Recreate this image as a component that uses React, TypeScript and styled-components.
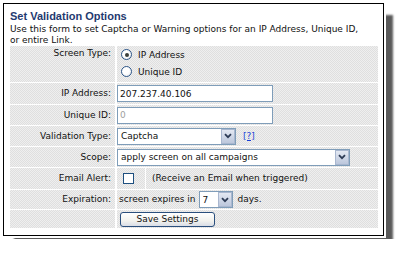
import React from "react";
import styled, { createGlobalStyle, css } from "styled-components";

const GlobalStyle = createGlobalStyle`
  html, body { margin: 0; padding: 0; background: #fff; }
  body { font-family: "DejaVu Sans", Verdana, sans-serif; }
`;

const dither = css`
  background-color: #e7e7e7;
  background-image: conic-gradient(#dfdfdf 25%, #efefef 0 50%, #dfdfdf 0 75%, #efefef 0);
  background-size: 2px 2px;
`;

const Page = styled.div`
  padding: 3px;
`;

const Card = styled.section`
  box-sizing: border-box;
  width: 381px;
  border: 1px solid #000;
  background: #fff;
  box-shadow: 0 0 0 2px #fff, 10px 11px 2px -1px #5a5a5a;
  padding: 6px 5px 7px 6px;
`;

const Title = styled.h2`
  margin: 0;
  font-family: "Liberation Sans", Arial, sans-serif;
  font-weight: bold;
  font-size: 11px;
  line-height: 13px;
  color: #1f3a70;
`;

const Desc = styled.p`
  margin: 1px 0 0;
  font-size: 9px;
  line-height: 11px;
  color: #111;
  white-space: nowrap;
`;

const Form = styled.form`
  display: grid;
  grid-template-columns: 105px 1fr;
  grid-template-rows: 36px 21px 20px 20px 20px 21px 19px 18px;
  column-gap: 2px;
  row-gap: 1px;
  background: #fff;
  font-size: 9px;
  color: #111;
`;

const Label = styled.div<{ $top?: boolean }>`
  ${dither};
  display: flex;
  justify-content: flex-end;
  align-items: ${(p) => (p.$top ? "flex-start" : "center")};
  padding: ${(p) => (p.$top ? "2px 4px 0 0" : "0 4px 0 0")};
  line-height: 11px;
  white-space: nowrap;
`;

const Value = styled.div<{ $pad?: number }>`
  ${dither};
  display: flex;
  align-items: center;
  padding-left: ${(p) => p.$pad ?? 0}px;
  line-height: 11px;
  white-space: nowrap;
`;

const RadioGroup = styled.div`
  ${dither};
  display: flex;
  flex-direction: column;
  padding-left: 4px;
`;

const RadioLine = styled.label`
  display: flex;
  align-items: center;
  gap: 6px;
  height: 17px;
`;

const RadioDot = styled.span<{ $on?: boolean }>`
  box-sizing: border-box;
  width: 11px;
  height: 11px;
  border-radius: 50%;
  border: 1px solid #2c5587;
  background: radial-gradient(circle at 40% 40%, #fff 40%, #e4e6ea 100%);
  display: flex;
  align-items: center;
  justify-content: center;
  &::after {
    content: "";
    display: ${(p) => (p.$on ? "block" : "none")};
    width: 4px;
    height: 4px;
    border-radius: 50%;
    background: #3a3f3a;
  }
`;

const TextInput = styled.input`
  box-sizing: border-box;
  width: 156px;
  height: 17px;
  border: 1px solid #7f9db9;
  background: #fff;
  padding: 0 2px;
  font-family: "DejaVu Sans", Verdana, sans-serif;
  font-size: 9px;
  color: #111;
  outline: none;
  &::placeholder { color: #a0a0a0; }
`;

const SelectWrap = styled.div<{ $w: number }>`
  position: relative;
  width: ${(p) => p.$w}px;
  height: 17px;
`;

const Select = styled.select`
  box-sizing: border-box;
  appearance: none;
  -webkit-appearance: none;
  width: 100%;
  height: 17px;
  border: 1px solid #7f9db9;
  border-radius: 0;
  background: #fff;
  padding: 0 18px 0 3px;
  font-family: "DejaVu Sans", Verdana, sans-serif;
  font-size: 9px;
  color: #111;
  outline: none;
`;

const Arrow = styled.span`
  position: absolute;
  top: 1px;
  right: 1px;
  bottom: 1px;
  width: 14px;
  box-sizing: border-box;
  border: 1px solid #a9b7cf;
  background: linear-gradient(#e3e8f2, #bcc7dc);
  display: flex;
  align-items: center;
  justify-content: center;
  pointer-events: none;
`;

const HelpLink = styled.a`
  margin-left: 7px;
  color: #1a3fd6;
  text-decoration: underline;
`;

const Split = styled.div`
  display: grid;
  grid-template-columns: 28px 1fr;
  column-gap: 1px;
  background: #fff;
`;

const Check = styled.span`
  box-sizing: border-box;
  display: block;
  width: 11px;
  height: 11px;
  border: 1px solid #1e4f7f;
  background: #fff;
`;

const Small = styled.span<{ $ml?: number }>`
  margin-left: ${(p) => p.$ml ?? 0}px;
`;

const Button = styled.button`
  box-sizing: border-box;
  width: 95px;
  height: 15px;
  border: 1px solid #2a4f7d;
  border-radius: 3px;
  background: linear-gradient(#ffffff 0%, #f2f2ee 60%, #d9dde6 100%);
  font-family: "DejaVu Sans", Verdana, sans-serif;
  font-size: 9px;
  line-height: 11px;
  color: #111;
  padding: 0;
`;

const Chevron = () => (
  <svg width="8" height="6" viewBox="0 0 8 6">
    <path d="M1 1.2 L4 4.2 L7 1.2" fill="none" stroke="#2d3b55" strokeWidth="1.8" />
  </svg>
);

const Dropdown: React.FC<{ w: number; value: string; options: string[] }> = ({ w, value, options }) => (
  <SelectWrap $w={w}>
    <Select defaultValue={value}>
      {options.map((o) => (
        <option key={o}>{o}</option>
      ))}
    </Select>
    <Arrow>
      <Chevron />
    </Arrow>
  </SelectWrap>
);

export default function App() {
  return (
    <Page>
      <GlobalStyle />
      <Card>
        <Title>Set Validation Options</Title>
        <Desc>
          Use this form to set Captcha or Warning options for an IP Address, Unique ID,
          <br />
          or entire Link.
        </Desc>
        <Form onSubmit={(e) => e.preventDefault()}>
          <Label $top>Screen Type:</Label>
          <RadioGroup>
            <RadioLine>
              <RadioDot $on />
              IP Address
            </RadioLine>
            <RadioLine>
              <RadioDot />
              Unique ID
            </RadioLine>
          </RadioGroup>

          <Label>IP Address:</Label>
          <Value>
            <TextInput defaultValue="207.237.40.106" />
          </Value>

          <Label>Unique ID:</Label>
          <Value>
            <TextInput placeholder="0" />
          </Value>

          <Label>Validation Type:</Label>
          <Value>
            <Dropdown w={119} value="Captcha" options={["Captcha", "Warning"]} />
            <HelpLink href="#">[?]</HelpLink>
          </Value>

          <Label>Scope:</Label>
          <Value>
            <Dropdown
              w={233}
              value="apply screen on all campaigns"
              options={["apply screen on all campaigns", "apply screen on this campaign"]}
            />
          </Value>

          <Label>Email Alert:</Label>
          <Split>
            <Value $pad={6}>
              <Check />
            </Value>
            <Value $pad={6}>(Receive an Email when triggered)</Value>
          </Split>

          <Label>Expiration:</Label>
          <Value $pad={2}>
            screen expires in
            <Small $ml={3}>
              <Dropdown w={34} value="7" options={["1", "3", "7", "14", "30"]} />
            </Small>
            <Small $ml={5}>days.</Small>
          </Value>

          <Label />
          <Value $pad={3}>
            <Button type="submit">Save Settings</Button>
          </Value>
        </Form>
      </Card>
    </Page>
  );
}
